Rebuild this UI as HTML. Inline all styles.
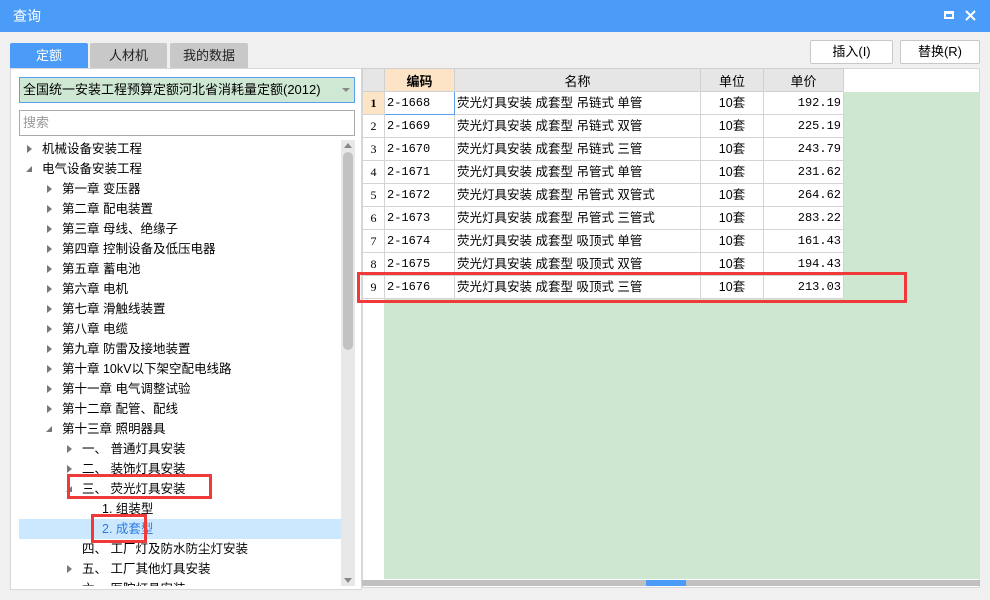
<!DOCTYPE html>
<html><head><meta charset="utf-8"><style>
*{box-sizing:border-box;margin:0;padding:0}
body{width:990px;height:600px;background:#f0f0f0;position:relative;overflow:hidden;font-family:"Liberation Sans","Noto Sans CJK SC",sans-serif;font-size:12px;color:#000}
.a{position:absolute}
.title{left:0;top:0;width:990px;height:32px;background:#4a9cf8;color:#fff;font-size:14px;line-height:32px;padding-left:13px}
.tab{top:43px;height:25px;line-height:25px;text-align:center;font-size:13px;background:#c8c8c8;color:#222;border-radius:2px 2px 0 0}
.btn{top:40px;height:24px;line-height:22px;text-align:center;border:1px solid #c8c8c8;background:#fff;font-size:13px;border-radius:2px}
.tr{left:0;height:20px;line-height:20px;font-size:12.5px;white-space:nowrap}
.ar{display:inline-block;width:0;height:0;border-left:5px solid #777;border-top:4px solid transparent;border-bottom:4px solid transparent;position:absolute;top:6px}
.ad{display:inline-block;position:absolute;top:7px;width:0;height:0;border-right:6px solid #777;border-top:6px solid transparent}
.red{border:3px solid #f03a3a}
table{border-collapse:collapse;font-family:"Liberation Mono","Noto Sans CJK SC",monospace;font-size:12px}
td{border:1px solid #d4d4d4;height:23px;padding:0 2px;background:#fff;white-space:nowrap;vertical-align:middle;line-height:21px}
td.z{font-family:"Liberation Sans","Noto Sans CJK SC",sans-serif;font-size:12.5px}
td.n{background:#fff;text-align:center;width:21px;font-family:"Liberation Serif",serif}
td.r{text-align:right}
td.c{text-align:center}
th{height:23px;background:#e6e6e6;border:1px solid #d0d0d0;font-weight:normal;font-family:"Liberation Sans","Noto Sans CJK SC",sans-serif;font-size:13px}
</style></head><body>
<div class="a title">查询</div>
<div class="a" style="left:944px;top:11px;width:10px;height:8px;border:2px solid #fff;border-top-width:3px"></div>
<svg class="a" style="left:965px;top:10px" width="11" height="11"><path d="M1 1L10 10M10 1L1 10" stroke="#fff" stroke-width="2"/></svg>
<div class="a tab" style="left:10px;width:78px;background:#4a9cf8;color:#fff">定额</div>
<div class="a tab" style="left:90px;width:77px">人材机</div>
<div class="a tab" style="left:170px;width:78px">我的数据</div>
<div class="a btn" style="left:810px;width:83px">插入(I)</div>
<div class="a btn" style="left:900px;width:80px">替换(R)</div>

<div class="a" style="left:10px;top:68px;width:352px;height:522px;background:#fff;border:1px solid #d8d8d8"></div>
<div class="a" style="left:19px;top:77px;width:336px;height:26px;background:#cfe8d4;border:1px solid #5aa0f0;line-height:24px;padding-left:3px;font-size:13px">全国统一安装工程预算定额河北省消耗量定额(2012)</div>
<div class="a" style="left:342px;top:88px;border-top:4px solid #888;border-left:4px solid transparent;border-right:4px solid transparent"></div>
<div class="a" style="left:19px;top:110px;width:336px;height:26px;background:#fff;border:1px solid #aaa;line-height:24px;padding-left:3px;font-size:13px;color:#999">搜索</div>
<div class="a" style="left:341px;top:140px;width:14px;height:446px;background:#e8e8e8"></div>
<div class="a" style="left:343px;top:152px;width:10px;height:198px;background:#c2c2c2;border-radius:5px"></div>
<div class="a" style="left:344px;top:143px;border-bottom:5px solid #888;border-left:4px solid transparent;border-right:4px solid transparent"></div>
<div class="a" style="left:344px;top:578px;border-top:5px solid #888;border-left:4px solid transparent;border-right:4px solid transparent"></div>
<div class="a" style="left:19px;top:519px;width:322px;height:20px;background:#cce8ff"></div>

<div class="a" style="left:0;top:139px;width:340px;height:447px;overflow:hidden">
<div class="tr a" style="top:0"><i class="ar" style="left:27px"></i><span class="a" style="left:42px">机械设备安装工程</span></div>
<div class="tr a" style="top:20px"><i class="ad" style="left:26px"></i><span class="a" style="left:42px">电气设备安装工程</span></div>
<div class="tr a" style="top:40px"><i class="ar" style="left:47px"></i><span class="a" style="left:62px">第一章 变压器</span></div>
<div class="tr a" style="top:60px"><i class="ar" style="left:47px"></i><span class="a" style="left:62px">第二章 配电装置</span></div>
<div class="tr a" style="top:80px"><i class="ar" style="left:47px"></i><span class="a" style="left:62px">第三章 母线、绝缘子</span></div>
<div class="tr a" style="top:100px"><i class="ar" style="left:47px"></i><span class="a" style="left:62px">第四章 控制设备及低压电器</span></div>
<div class="tr a" style="top:120px"><i class="ar" style="left:47px"></i><span class="a" style="left:62px">第五章 蓄电池</span></div>
<div class="tr a" style="top:140px"><i class="ar" style="left:47px"></i><span class="a" style="left:62px">第六章 电机</span></div>
<div class="tr a" style="top:160px"><i class="ar" style="left:47px"></i><span class="a" style="left:62px">第七章 滑触线装置</span></div>
<div class="tr a" style="top:180px"><i class="ar" style="left:47px"></i><span class="a" style="left:62px">第八章 电缆</span></div>
<div class="tr a" style="top:200px"><i class="ar" style="left:47px"></i><span class="a" style="left:62px">第九章 防雷及接地装置</span></div>
<div class="tr a" style="top:220px"><i class="ar" style="left:47px"></i><span class="a" style="left:62px">第十章 10kV以下架空配电线路</span></div>
<div class="tr a" style="top:240px"><i class="ar" style="left:47px"></i><span class="a" style="left:62px">第十一章 电气调整试验</span></div>
<div class="tr a" style="top:260px"><i class="ar" style="left:47px"></i><span class="a" style="left:62px">第十二章 配管、配线</span></div>
<div class="tr a" style="top:280px"><i class="ad" style="left:46px"></i><span class="a" style="left:62px">第十三章 照明器具</span></div>
<div class="tr a" style="top:300px"><i class="ar" style="left:67px"></i><span class="a" style="left:82px">一、 普通灯具安装</span></div>
<div class="tr a" style="top:320px"><i class="ar" style="left:67px"></i><span class="a" style="left:82px">二、 装饰灯具安装</span></div>
<div class="tr a" style="top:340px"><i class="ad" style="left:66px"></i><span class="a" style="left:82px">三、 荧光灯具安装</span></div>
<div class="tr a" style="top:360px"><span class="a" style="left:102px">1. 组装型</span></div>
<div class="tr a" style="top:380px;color:#2a7ae2"><span class="a" style="left:102px">2. 成套型</span></div>
<div class="tr a" style="top:400px"><span class="a" style="left:82px">四、 工厂灯及防水防尘灯安装</span></div>
<div class="tr a" style="top:420px"><i class="ar" style="left:67px"></i><span class="a" style="left:82px">五、 工厂其他灯具安装</span></div>
<div class="tr a" style="top:440px"><span class="a" style="left:82px">六、 医院灯具安装</span></div>
</div>

<div class="a" style="left:362px;top:68px;width:618px;height:520px;background:#fff;border:1px solid #d8d8d8"></div>
<div class="a" style="left:384px;top:92px;width:596px;height:487px;background:#cde7d0"></div>
<div class="a" style="left:362px;top:580px;width:618px;height:6px;background:#c0c0c0"></div>
<div class="a" style="left:646px;top:580px;width:40px;height:6px;background:#4a9cf8"></div>
<table class="a" style="left:362px;top:68px">
<tr><th style="width:22px"></th><th style="width:70px;background:#fde4c6;font-weight:bold">编码</th><th style="width:246px">名称</th><th style="width:63px">单位</th><th style="width:80px">单价</th></tr>
<tr><td class="n" style="background:#fde4c6;font-weight:bold">1</td><td style="border:1px solid #5aa0f0">2-1668</td><td class="z">荧光灯具安装 成套型 吊链式 单管</td><td class="c z">10套</td><td class="r">192.19</td></tr>
<tr><td class="n">2</td><td>2-1669</td><td class="z">荧光灯具安装 成套型 吊链式 双管</td><td class="c z">10套</td><td class="r">225.19</td></tr>
<tr><td class="n">3</td><td>2-1670</td><td class="z">荧光灯具安装 成套型 吊链式 三管</td><td class="c z">10套</td><td class="r">243.79</td></tr>
<tr><td class="n">4</td><td>2-1671</td><td class="z">荧光灯具安装 成套型 吊管式 单管</td><td class="c z">10套</td><td class="r">231.62</td></tr>
<tr><td class="n">5</td><td>2-1672</td><td class="z">荧光灯具安装 成套型 吊管式 双管式</td><td class="c z">10套</td><td class="r">264.62</td></tr>
<tr><td class="n">6</td><td>2-1673</td><td class="z">荧光灯具安装 成套型 吊管式 三管式</td><td class="c z">10套</td><td class="r">283.22</td></tr>
<tr><td class="n">7</td><td>2-1674</td><td class="z">荧光灯具安装 成套型 吸顶式 单管</td><td class="c z">10套</td><td class="r">161.43</td></tr>
<tr><td class="n">8</td><td>2-1675</td><td class="z">荧光灯具安装 成套型 吸顶式 双管</td><td class="c z">10套</td><td class="r">194.43</td></tr>
<tr><td class="n">9</td><td>2-1676</td><td class="z">荧光灯具安装 成套型 吸顶式 三管</td><td class="c z">10套</td><td class="r">213.03</td></tr>
</table>

<div class="a red" style="left:357px;top:272px;width:550px;height:31px"></div>
<div class="a red" style="left:67px;top:474px;width:145px;height:25px"></div>
<div class="a red" style="left:91px;top:514px;width:56px;height:29px"></div>
</body></html>
